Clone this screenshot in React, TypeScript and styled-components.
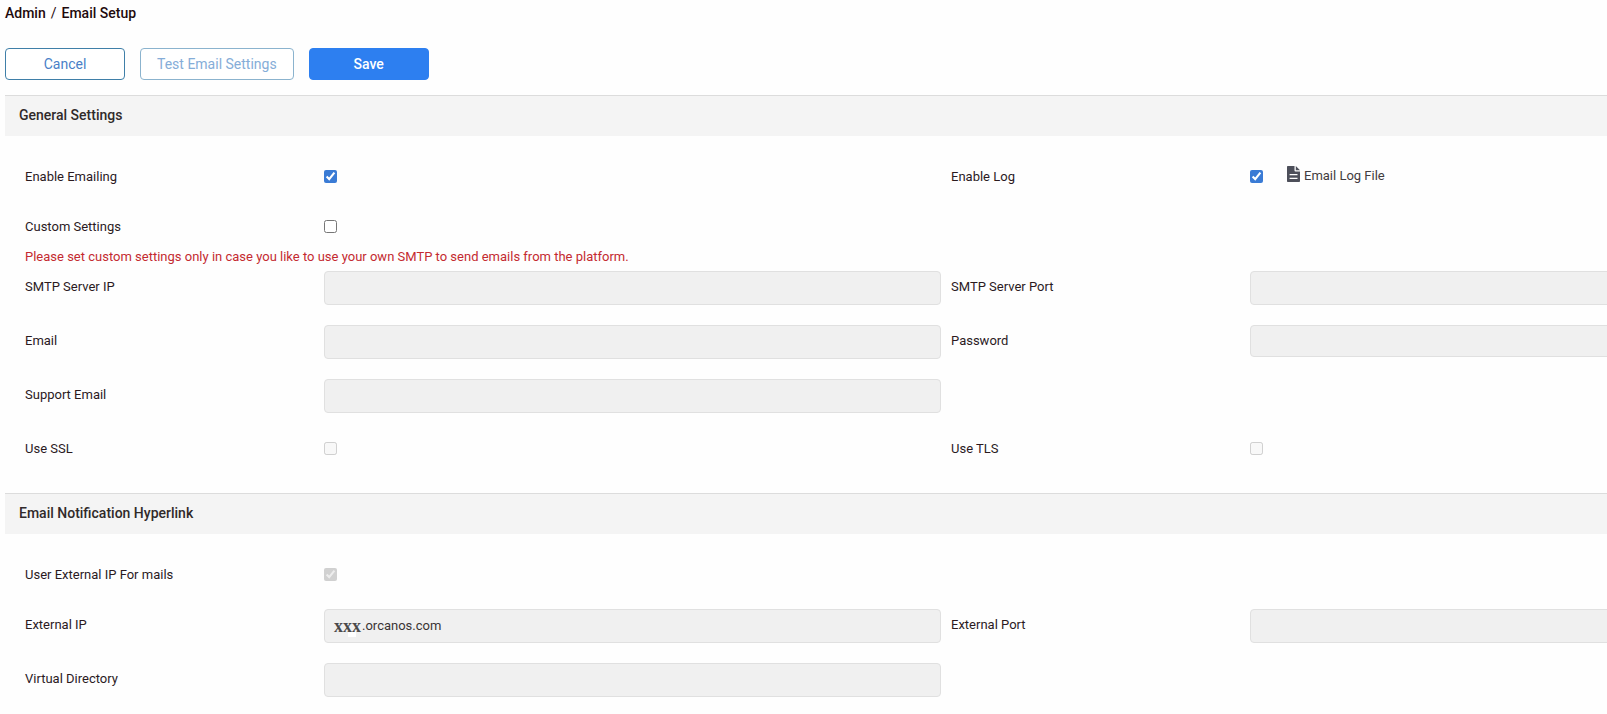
import React from "react";
import styled, { createGlobalStyle } from "styled-components";

const GlobalStyle = createGlobalStyle`
  *, *::before, *::after { box-sizing: border-box; }
  body {
    margin: 0;
    background: #fefefe;
    color: #2b1a1e;
    font-family: Roboto, "Liberation Sans", sans-serif;
    font-size: 13px;
    overflow-x: hidden;
  }
`;

const Page = styled.main`
  padding-left: 5px;
`;

const Breadcrumb = styled.nav`
  display: flex;
  gap: 5px;
  padding-top: 3px;
  font-size: 14px;
  font-weight: 500;
  line-height: 21px;
  color: #1f0a0c;
`;

const Crumb = styled.a`
  color: inherit;
  text-decoration: none;
`;

const Divider = styled.span`
  font-weight: 400;
`;

const Toolbar = styled.div`
  display: flex;
  gap: 15px;
  padding: 24px 0 15px;
`;

const Button = styled.button<{ $primary?: boolean }>`
  min-width: 120px;
  height: 32px;
  padding: 0 16px;
  border: 1px solid ${(p) => (p.$primary ? "#2d7ff0" : "#3f7fa8")};
  border-radius: 4px;
  background: ${(p) => (p.$primary ? "#2d7ff0" : "#fff")};
  color: ${(p) => (p.$primary ? "#fff" : "#4a7fc8")};
  font-family: inherit;
  font-size: 14px;
  font-weight: ${(p) => (p.$primary ? 500 : 400)};

  &:disabled {
    border-color: #8bb3ce;
    color: #85add8;
  }
`;

const SectionTitle = styled.h2`
  margin: 0;
  padding: 0 14px 2px;
  border-top: 1px solid #dcdcdc;
  background: #f4f4f4;
  color: #302a2a;
  font-size: 14px;
  font-weight: 500;
  line-height: 38px;
`;

const SectionBody = styled.div`
  padding: 25px 0 29px 20px;
  overflow: hidden;
`;

const Row = styled.div<{ $gap?: number }>`
  display: grid;
  grid-template-columns: repeat(2, minmax(916px, 1fr));
  column-gap: 10px;
  margin-bottom: ${(p) => p.$gap ?? 0}px;
`;

const Field = styled.div`
  display: grid;
  grid-template-columns: 299px 1fr;
`;

const Label = styled.label`
  line-height: 31px;
`;

const Control = styled.div`
  position: relative;
  display: flex;
  align-items: center;
`;

const Checkbox = styled.input.attrs({ type: "checkbox" })`
  width: 13px;
  height: 13px;
  margin: 0;
  accent-color: #3a7bd5;
`;

const TextBox = styled.input<{ $masked?: boolean }>`
  width: 100%;
  height: ${(p) => (p.type === "password" ? 32 : 34)}px;
  align-self: flex-start;
  padding: 0 10px 2px ${(p) => (p.$masked ? 37 : 10)}px;
  border: 1px solid #e0e0e0;
  border-radius: 4px;
  background: #f0f0f0;
  color: #3a3434;
  font-family: inherit;
  font-size: 13px;
`;

const MaskLayer = styled.div`
  position: absolute;
  inset: 0;
  z-index: 1;
  pointer-events: none;
`;

const Mask = styled.span`
  position: absolute;
  left: 10px;
  top: 7px;
  color: #4a4a4a;
  font-family: "Liberation Serif", serif;
  font-size: 18px;
  font-weight: 700;
  line-height: 20px;

  &::before {
    content: "";
    position: absolute;
    z-index: -1;
    left: 14px;
    bottom: -1px;
    width: 8px;
    height: 6px;
    background: #fff;
  }
`;

const Notice = styled.p`
  margin: 0;
  color: #c42a30;
  line-height: 29px;
`;

const LogLink = styled.a`
  display: flex;
  align-items: center;
  gap: 4px;
  margin-left: 24px;
  padding-bottom: 2px;
  color: #423c40;
  text-decoration: none;

  svg {
    margin-bottom: 4px;
  }
`;

const FileIcon = () => (
  <svg width="13" height="16" viewBox="0 0 13 16" aria-hidden="true">
    <path
      fill="#4d4f5a"
      d="M1 0h6.5v4.6c0 .5.4.9.9.9H13V15c0 .6-.4 1-1 1H1c-.6 0-1-.4-1-1V1c0-.6.4-1 1-1zM8.8 0l4.2 4.2H8.8z"
    />
    <path stroke="#fefefe" strokeWidth="1.3" d="M2.6 8.7h7.9M2.6 12.3h7.9" />
  </svg>
);

type CheckFieldProps = {
  id: string;
  label: string;
  checked?: boolean;
  disabled?: boolean;
  children?: React.ReactNode;
};

const CheckField = ({ id, label, checked, disabled, children }: CheckFieldProps) => (
  <Field>
    <Label htmlFor={id}>{label}</Label>
    <Control>
      <Checkbox id={id} defaultChecked={checked} disabled={disabled} />
      {children}
    </Control>
  </Field>
);

type TextFieldProps = {
  id: string;
  label: string;
  type?: string;
  value?: string;
  mask?: string;
};

const TextField = ({ id, label, type = "text", value, mask }: TextFieldProps) => (
  <Field>
    <Label htmlFor={id}>{label}</Label>
    <Control>
      <TextBox id={id} type={type} defaultValue={value} $masked={!!mask} disabled />
      {mask && (
        <MaskLayer>
          <Mask>{mask}</Mask>
        </MaskLayer>
      )}
    </Control>
  </Field>
);

export default function App() {
  return (
    <Page>
      <GlobalStyle />
      <Breadcrumb aria-label="Breadcrumb">
        <Crumb href="#admin">Admin</Crumb>
        <Divider>/</Divider>
        <Crumb href="#email-setup">Email Setup</Crumb>
      </Breadcrumb>

      <Toolbar>
        <Button type="button">Cancel</Button>
        <Button type="button" disabled>
          Test Email Settings
        </Button>
        <Button type="button" $primary>
          Save
        </Button>
      </Toolbar>

      <section>
        <SectionTitle>General Settings</SectionTitle>
        <SectionBody>
          <Row $gap={19}>
            <CheckField id="enable-emailing" label="Enable Emailing" checked />
            <CheckField id="enable-log" label="Enable Log" checked>
              <LogLink href="#email-log">
                <FileIcon />
                Email Log File
              </LogLink>
            </CheckField>
          </Row>
          <Row>
            <CheckField id="custom-settings" label="Custom Settings" />
          </Row>
          <Notice>
            Please set custom settings only in case you like to use your own SMTP to send emails from the platform.
          </Notice>
          <Row $gap={20}>
            <TextField id="smtp-ip" label="SMTP Server IP" />
            <TextField id="smtp-port" label="SMTP Server Port" />
          </Row>
          <Row $gap={20}>
            <TextField id="email" label="Email" />
            <TextField id="password" label="Password" type="password" />
          </Row>
          <Row $gap={20}>
            <TextField id="support-email" label="Support Email" />
          </Row>
          <Row>
            <CheckField id="use-ssl" label="Use SSL" disabled />
            <CheckField id="use-tls" label="Use TLS" disabled />
          </Row>
        </SectionBody>
      </section>

      <section>
        <SectionTitle>Email Notification Hyperlink</SectionTitle>
        <SectionBody>
          <Row $gap={19}>
            <CheckField id="use-external-ip" label="User External IP For mails" checked disabled />
          </Row>
          <Row $gap={20}>
            <TextField id="external-ip" label="External IP" value=".orcanos.com" mask="xxx" />
            <TextField id="external-port" label="External Port" />
          </Row>
          <Row>
            <TextField id="virtual-directory" label="Virtual Directory" />
          </Row>
        </SectionBody>
      </section>
    </Page>
  );
}
